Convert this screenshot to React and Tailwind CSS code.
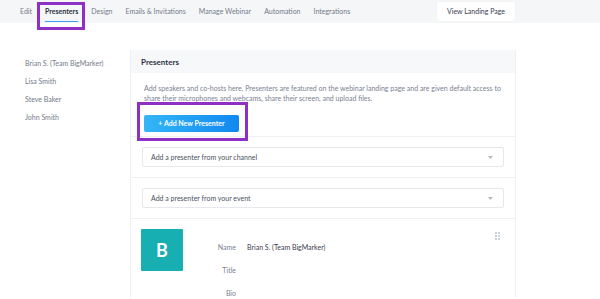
import React from 'react'

const tabs = ['Edit', 'Presenters', 'Design', 'Emails & Invitations', 'Manage Webinar', 'Automation', 'Integrations']
const people = ['Brian S. (Team BigMarker)', 'Lisa Smith', 'Steve Baker', 'John Smith']

const Chevron = () => (
  <svg width="5" height="3" viewBox="0 0 5 3" className="text-[#b3b8c2]">
    <path d="M0 0h5L2.5 3z" fill="currentColor" />
  </svg>
)

const Select = ({ label }) => (
  <div className="h-[20px] border border-[#e6e8ec] rounded-[2px] flex items-center justify-between pl-[8px] pr-[10px] bg-white">
    <span className="text-[7px] text-[#4a5160]">{label}</span>
    <Chevron />
  </div>
)

const App = () => {
  return (
    <div className="w-[600px] h-[299px] overflow-hidden bg-white font-['Lato',sans-serif]">
      <div className="h-[23px] bg-[#f5f6f8] flex items-center pl-[20px] pr-[85px]">
        <div className="flex items-center gap-[13px] h-full">
          {tabs.map((t) => (
            <div key={t} className="relative h-full flex items-center">
              <span className={t === 'Presenters' ? 'text-[7px] font-bold text-[#2c3240]' : 'text-[7px] text-[#737a8a]'}>{t}</span>
              {t === 'Presenters' && (
                <>
                  <div className="absolute left-0 right-0 bottom-[1px] h-[1.5px] bg-[#3ca0f5]" />
                  <div className="absolute -left-[8px] -right-[7px] top-[2px] h-[28px] border-[3px] border-[#8e2fc6]" />
                </>
              )}
            </div>
          ))}
        </div>
        <button className="ml-auto h-[19px] w-[78px] bg-white rounded-[2px] text-[7px] text-[#3a4050] shadow-[0_0_1px_rgba(0,0,0,0.08)]">
          View Landing Page
        </button>
      </div>

      <div className="flex">
        <div className="w-[130px] pl-[25px] pt-[36px] flex flex-col gap-[9px]">
          {people.map((p) => (
            <div key={p} className="text-[7px] text-[#737a8a] leading-[9px]">{p}</div>
          ))}
        </div>

        <div className="mt-[27px] w-[386px] border-l border-r border-[#eef0f3]">
          <div className="h-[23px] bg-[#f7f8fa] flex items-center pl-[10px]">
            <span className="text-[8px] font-bold text-[#2c3240]">Presenters</span>
          </div>

          <div className="px-[13px] pt-[10px] border-b border-[#eef0f3] h-[64px]">
            <p className="text-[7px] leading-[10px] text-[#7a8191]">
              Add speakers and co-hosts here. Presenters are featured on the webinar landing page and are given default access to share their microphones and webcams, share their screen, and upload files.
            </p>
            <div className="relative inline-block mt-[5px]">
              <button className="h-[17px] w-[95px] rounded-[2px] bg-gradient-to-r from-[#34b6f7] to-[#1188f0] text-white text-[7px] font-bold">
                + Add New Presenter
              </button>
              <div className="absolute -left-[7px] -right-[9px] -top-[6px] -bottom-[9px] border-[3px] border-[#8e2fc6]" />
            </div>
          </div>

          <div className="px-[11px] py-[10px] border-b border-[#eef0f3]">
            <Select label="Add a presenter from your channel" />
          </div>
          <div className="px-[11px] py-[10px] border-b border-[#eef0f3]">
            <Select label="Add a presenter from your event" />
          </div>

          <div className="relative flex pl-[10px] pt-[10px]">
            <div className="w-[42px] h-[42px] bg-[#17afb2] rounded-[1px] flex items-center justify-center text-white text-[18px] font-bold">
              B
            </div>
            <div className="ml-[23px] pt-[14px] grid grid-cols-[30px_1fr] gap-x-[11px] gap-y-[14px] text-[7px] leading-[9px]">
              <span className="text-right text-[#7a8191]">Name</span>
              <span className="text-[#3a4050]">Brian S. (Team BigMarker)</span>
              <span className="text-right text-[#7a8191]">Title</span>
              <span />
              <span className="text-right text-[#7a8191]">Bio</span>
              <span />
            </div>
            <div className="absolute right-[15px] top-[13px] grid grid-cols-2 gap-[1px]">
              {Array(6).fill(0).map((_, i) => (
                <div key={i} className="w-[2px] h-[2px] bg-[#cdd1d8]" />
              ))}
            </div>
          </div>
        </div>
      </div>
    </div>
  )
}

export default App
